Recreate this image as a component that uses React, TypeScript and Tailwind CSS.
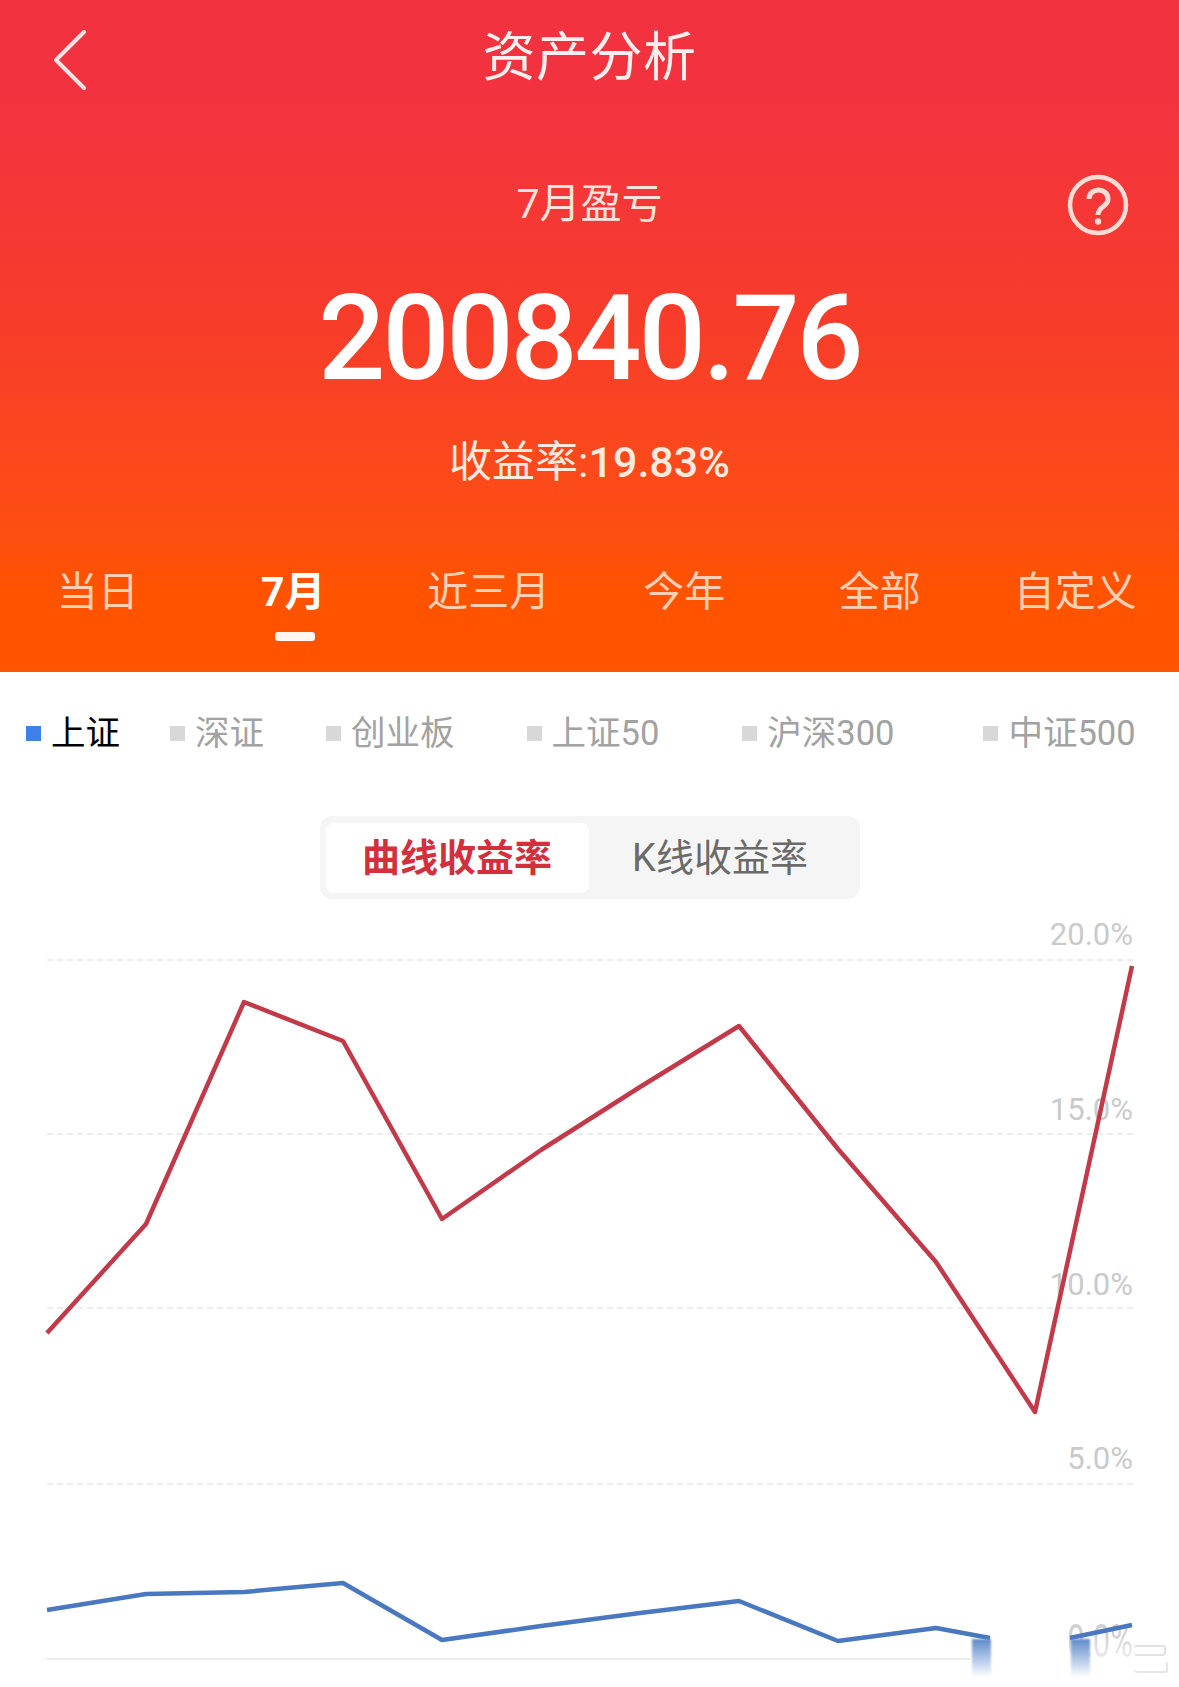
import React from 'react';

const tabs = ['当日', '7月', '近三月', '今年', '全部', '自定义'];

const indexes = [
  { name: '上证', left: 'ml-[26px]' },
  { name: '深证', left: 'ml-[50px]' },
  { name: '创业板', left: 'ml-[62px]' },
  { name: '上证50', left: 'ml-[72px]' },
  { name: '沪深300', left: 'ml-[83px]' },
  { name: '中证500', left: 'ml-[89px]' },
];

const gridLines = [959, 1133, 1307, 1483, 1658];

const axisLabels = [
  { text: '20.0%', top: 'top-[16px]' },
  { text: '15.0%', top: 'top-[191px]' },
  { text: '10.0%', top: 'top-[366px]' },
  { text: '5.0%', top: 'top-[540px]' },
];

const redLine = '47,1332 146,1223 244,1001 343,1040 442,1218 541,1149 640,1086 739,1025 838,1148 936,1261 1035,1411 1132,965';
const blueLeft = '47,1609 146,1593 244,1591 343,1582 442,1639 541,1625 640,1612 739,1600 838,1640 936,1627 990,1637';
const blueRight = '1070,1637 1132,1624';

const App: React.FC = () => {
  return (
    <div className="w-[1179px] h-[1687px] overflow-hidden bg-white font-['Roboto','Noto_Sans_CJK_SC',sans-serif]">
      {/* Header */}
      <div className="h-[672px] bg-gradient-to-b from-[#f2333f] from-[14%] via-[#f73c2a] via-[48%] to-[#ff5300] to-[88%] text-white flex flex-col">
        <div className="relative h-[116px] flex items-center justify-center">
          <svg className="absolute left-[52px] top-[29px]" width="36" height="62" viewBox="0 0 36 62" fill="none">
            <path d="M32 3 L4 31 L32 59" stroke="#fbe3e3" strokeWidth="4" strokeLinecap="round" strokeLinejoin="round" />
          </svg>
          <span className="text-[53px] leading-none tracking-[0.5px] text-[#fdeeee]">资产分析</span>
        </div>

        <div className="relative h-[76px] mt-[50px] flex items-center justify-center">
          <span className="text-[41px] leading-none text-[#fde3dc]">7月盈亏</span>
          <svg className="absolute left-[1067px] top-[8px]" width="62" height="62" viewBox="0 0 62 62" fill="none">
            <circle cx="31" cy="31" r="28" stroke="#fddcd6" strokeWidth="4.5" />
            <path d="M22 25 C22 13 41 13 41 25 C41 33 31 32 31 41" stroke="#fddcd6" strokeWidth="5" />
            <circle cx="31" cy="47.5" r="3.2" fill="#fddcd6" />
          </svg>
        </div>

        <div className="h-[118px] mt-[38px] flex items-center justify-center">
          <span className="text-[118px] leading-none font-medium tracking-[-3px]">200840.76</span>
        </div>

        <div className="h-[50px] mt-[39px] flex items-center justify-center text-[43px] leading-none text-[#fdeadf]">
          收益率:<span className="font-medium">19.83%</span>
        </div>

        <div className="grid grid-cols-6 pr-[6px] mt-[80px]">
          {tabs.map((tab, i) => (
            <div key={tab} className="flex flex-col items-center h-[90px]">
              <div className={`h-[50px] flex items-center text-[41px] leading-none ${i === 1 ? 'font-bold text-white' : 'text-[#ffcfb4]'}`}>
                {tab}
              </div>
              {i === 1 && <div className="mt-[15px] ml-[4px] w-[40px] h-[9px] rounded-[3px] bg-[#fff6f0]" />}
            </div>
          ))}
        </div>
      </div>

      {/* Index legend */}
      <div className="h-[44px] mt-[39px] flex items-center">
        {indexes.map((item, i) => (
          <div key={item.name} className={`flex items-center shrink-0 gap-[10px] ${item.left}`}>
            <span className={`w-[15px] h-[15px] ${i === 0 ? 'bg-[#3f7fe8]' : 'bg-[#d8d8d8]'}`} />
            <span className={`text-[34.5px] leading-none ${i === 0 ? 'text-black' : 'text-[#a2a2a2]'}`}>{item.name}</span>
          </div>
        ))}
      </div>

      {/* Curve or K-line switch */}
      <div className="flex justify-center mt-[61px]">
        <div className="w-[540px] h-[83px] rounded-[12px] bg-[#f5f5f5] flex items-center pl-[6px]">
          <div className="w-[263px] h-[70px] rounded-[8px] bg-white flex items-center justify-center text-[38px] leading-none font-bold text-[#d42f3d]">
            曲线收益率
          </div>
          <div className="flex-1 flex items-center justify-center pr-[8px] text-[38px] leading-none text-[#6a6a6a]">
            K线收益率
          </div>
        </div>
      </div>

      {/* Chart */}
      <div className="relative h-[788px]">
        {axisLabels.map(label => (
          <span key={label.text} className={`absolute right-[46px] ${label.top} text-[31px] leading-[40px] text-[#cacaca]`}>
            {label.text}
          </span>
        ))}
        <span className="absolute right-[46px] top-[713px] origin-top scale-y-[1.5] text-[31px] leading-[40px] text-[#d0d0d0]">0.0%</span>
        <div className="absolute left-[1060px] top-[738px] w-[80px] h-[36px] bg-gradient-to-b from-white/10 to-white" />
        <svg className="absolute left-0 top-0" width="1179" height="788" viewBox="0 898 1179 788" fill="none">
          {gridLines.map((y, i) => (
            <line
              key={y}
              x1="47"
              x2={i === 4 ? 970 : 1133}
              y1={y}
              y2={y}
              stroke={i === 4 ? '#ececec' : '#ededed'}
              strokeWidth="2"
              strokeDasharray={i === 4 ? undefined : '6 4'}
            />
          ))}
          <polyline points={redLine} stroke="#c23a49" strokeWidth="4.5" strokeLinejoin="round" />
          <polyline points={blueLeft} stroke="#4a78c0" strokeWidth="4.5" strokeLinejoin="round" />
          <polyline points={blueRight} stroke="#4a78c0" strokeWidth="4.5" strokeLinejoin="round" />
        </svg>
        {/* smeared bits of the cut-off watermark */}
        <div className="absolute left-[972px] top-[740px] w-[19px] h-[38px] blur-[1px] bg-gradient-to-b from-[#5f8bc9] to-white" />
        <div className="absolute left-[1071px] top-[740px] w-[19px] h-[38px] blur-[1px] bg-gradient-to-b from-[#5f8bc9] to-white" />
        <div className="absolute left-[1134px] top-[746px] w-[32px] h-[11px] rounded-[3px] border-2 border-l-0 border-[#e2e2e2]" />
        <div className="absolute left-[1134px] top-[763px] w-[34px] h-[11px] rounded-[3px] border-2 border-l-0 border-t-0 border-[#e6e6e6]" />
      </div>
    </div>
  );
};

export default App;
